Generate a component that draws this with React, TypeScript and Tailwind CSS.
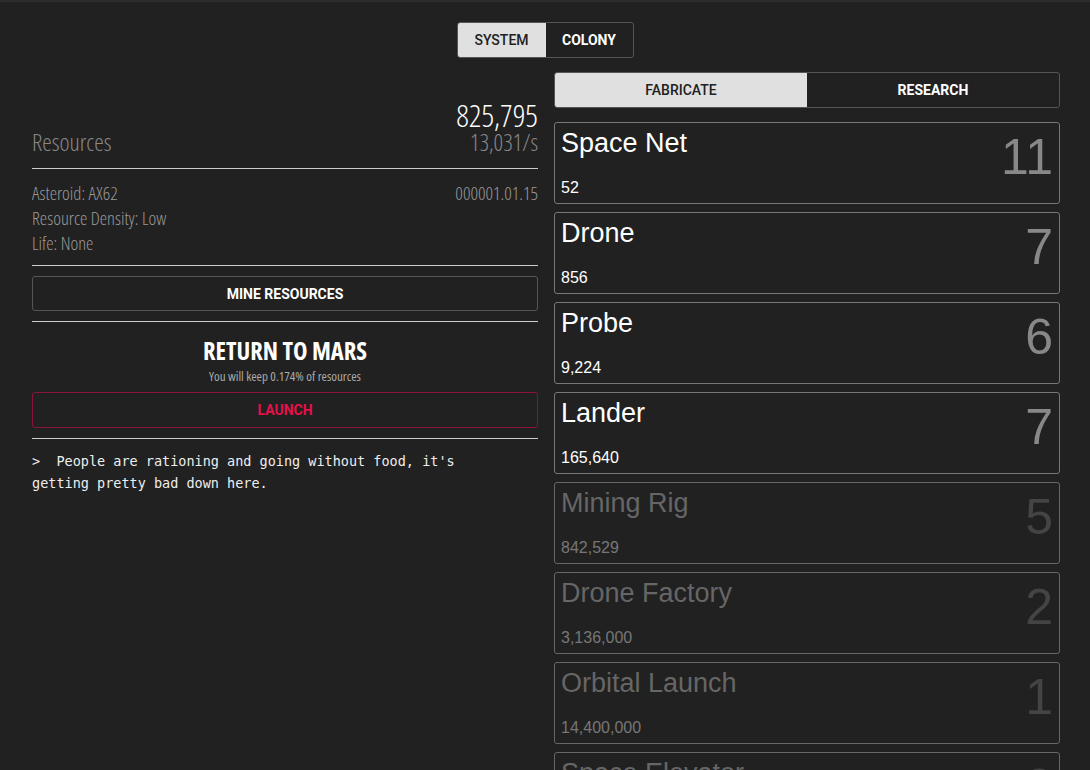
import React from "react";

const items = [
  { name: "Space Net", cost: "52", count: 11, on: true },
  { name: "Drone", cost: "856", count: 7, on: true },
  { name: "Probe", cost: "9,224", count: 6, on: true },
  { name: "Lander", cost: "165,640", count: 7, on: true },
  { name: "Mining Rig", cost: "842,529", count: 5, on: false },
  { name: "Drone Factory", cost: "3,136,000", count: 2, on: false },
  { name: "Orbital Launch", cost: "14,400,000", count: 1, on: false },
  { name: "Space Elevator", cost: "72,000,000", count: 0, on: false },
];

const cond = "font-['Open_Sans',sans-serif] font-stretch-condensed";

export default function App() {
  return (
    <div className="h-[770px] bg-[#212121] border-t-2 border-[#2c2c2c] text-white overflow-hidden">
      <div className="flex justify-center pt-5">
        <div className="flex border border-[#555] rounded-[3px] overflow-hidden font-['Roboto',sans-serif] font-medium text-sm">
          <button className="w-[88px] h-[34px] bg-[#e0e0e0] text-[#212121]">SYSTEM</button>
          <button className="w-[87px] h-[34px] text-white font-bold">COLONY</button>
        </div>
      </div>

      <div className="flex gap-4 px-8 pt-[14px]">
        <div className="w-[506px] shrink-0">
          <div className={`flex justify-between items-end pt-[28px] pb-[14px] border-b border-[#ccc] ${cond} font-light`}>
            <span className="text-[24px] text-[#888] leading-[24px]">Resources</span>
            <div className="text-right">
              <div className="text-[31px] leading-[30px] text-white">825,795</div>
              <div className="text-[23.5px] leading-[24px] text-[#888]">13,031/s</div>
            </div>
          </div>
          <div className={`flex justify-between pt-[11px] pb-[10px] border-b border-[#ccc] ${cond} font-light text-[18.5px] leading-[25px] text-[#999]`}>
            <div>
              <div>Asteroid: AX62</div>
              <div>Resource Density: Low</div>
              <div>Life: None</div>
            </div>
            <div>000001.01.15</div>
          </div>
          <div className="py-[10px] border-b border-[#ccc]">
            <button className="w-full h-[35px] border border-[#555] rounded-[3px] font-['Roboto',sans-serif] font-bold text-sm text-white">
              MINE RESOURCES
            </button>
          </div>
          <div className="pt-[15px] pb-[10px] border-b border-[#ccc] text-center">
            <div className={`${cond} font-bold text-[24.5px] leading-[28px]`}>RETURN TO MARS</div>
            <div className={`${cond} text-[13px] text-[#aaa] leading-[16px] mt-[3px] mb-[8px]`}>You will keep 0.174% of resources</div>
            <button className="w-full h-[36px] border border-[#8a1538] rounded-[3px] font-['Roboto',sans-serif] font-bold text-sm text-[#e8104a]">
              LAUNCH
            </button>
          </div>
          <p className="pt-[11px] max-w-[470px] font-['DejaVu_Sans_Mono',monospace] text-[13.5px] leading-[22px] text-[#eee] whitespace-pre-wrap">
            {">  People are rationing and going without food, it's getting pretty bad down here."}
          </p>
        </div>

        <div className="w-[506px] shrink-0">
          <div className="flex border border-[#555] rounded-[3px] overflow-hidden font-['Roboto',sans-serif] text-sm">
            <button className="flex-1 h-[34px] bg-[#e0e0e0] text-[#212121] font-medium">FABRICATE</button>
            <button className="flex-1 h-[34px] text-white font-bold">RESEARCH</button>
          </div>
          <div className="flex flex-col gap-2 mt-[14px]">
            {items.map((it) => (
              <div
                key={it.name}
                className={`relative h-[82px] border rounded-[3px] px-[6px] font-['Liberation_Sans',Arial,sans-serif] ${
                  it.on ? "border-[#777] text-white" : "border-[#666] text-[#666]"
                }`}
              >
                <div className="text-[27px] leading-[30px] pt-[5px]">{it.name}</div>
                <div className={`text-base mt-[18px] ${it.on ? "text-white" : "text-[#777]"}`}>{it.cost}</div>
                <div
                  className={`absolute right-[6px] top-[4px] text-[50px] leading-[60px] ${
                    it.on ? "text-[#888]" : "text-[#444]"
                  }`}
                >
                  {it.count}
                </div>
              </div>
            ))}
          </div>
        </div>
      </div>
    </div>
  );
}
